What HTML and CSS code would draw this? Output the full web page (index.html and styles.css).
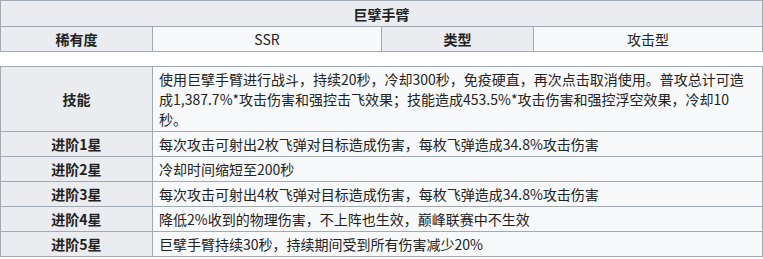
FILE: index.html
```html
<!DOCTYPE html>
<html lang="zh">
<head>
<meta charset="utf-8">
<link rel="stylesheet" href="styles.css">
</head>
<body>
<table class="info">
  <colgroup><col class="c-label"><col class="c-val"><col class="c-label"><col class="c-val"></colgroup>
  <tr><th class="title" colspan="4">巨擘手臂</th></tr>
  <tr><th>稀有度</th><td class="center">SSR</td><th>类型</th><td class="center">攻击型</td></tr>
</table>
<table class="info skills">
  <colgroup><col class="c-label"><col></colgroup>
  <tr><th>技能</th><td>使用巨擘手臂进行战斗，持续20秒，冷却300秒，免疫硬直，再次点击取消使用。普攻总计可造成1,387.7%*攻击伤害和强控击飞效果；技能造成453.5%*攻击伤害和强控浮空效果，冷却10秒。</td></tr>
  <tr><th>进阶1星</th><td>每次攻击可射出2枚飞弹对目标造成伤害，每枚飞弹造成34.8%攻击伤害</td></tr>
  <tr><th>进阶2星</th><td>冷却时间缩短至200秒</td></tr>
  <tr><th>进阶3星</th><td>每次攻击可射出4枚飞弹对目标造成伤害，每枚飞弹造成34.8%攻击伤害</td></tr>
  <tr><th>进阶4星</th><td>降低2%收到的物理伤害，不上阵也生效，巅峰联赛中不生效</td></tr>
  <tr><th>进阶5星</th><td>巨擘手臂持续30秒，持续期间受到所有伤害减少20%</td></tr>
</table>
</body>
</html>
```
FILE: styles.css
```css
html, body {
  margin: 0;
  padding: 0;
  background: #ffffff;
}
body {
  font-family: "Noto Sans CJK SC", "Noto Sans", sans-serif;
  font-size: 14px;
  color: #222222;
}
.info {
  width: 763px;
  table-layout: fixed;
  border-collapse: collapse;
  background: #f8f9fa;
}
.skills {
  margin-top: 14px;
}
.c-label { width: 152px; }
.c-val { width: 229px; }
.info th,
.info td {
  border: 1px solid #a2a9b1;
  padding: 2px 6px;
  line-height: 20px;
  height: 20px;
  vertical-align: middle;
}
.info th {
  background: #eaecf0;
  font-weight: bold;
  text-align: center;
}
.info th.title {
  padding-top: 3px;
}
.info td {
  background: #f8f9fa;
  text-align: left;
}
.info td.center {
  text-align: center;
}
```
